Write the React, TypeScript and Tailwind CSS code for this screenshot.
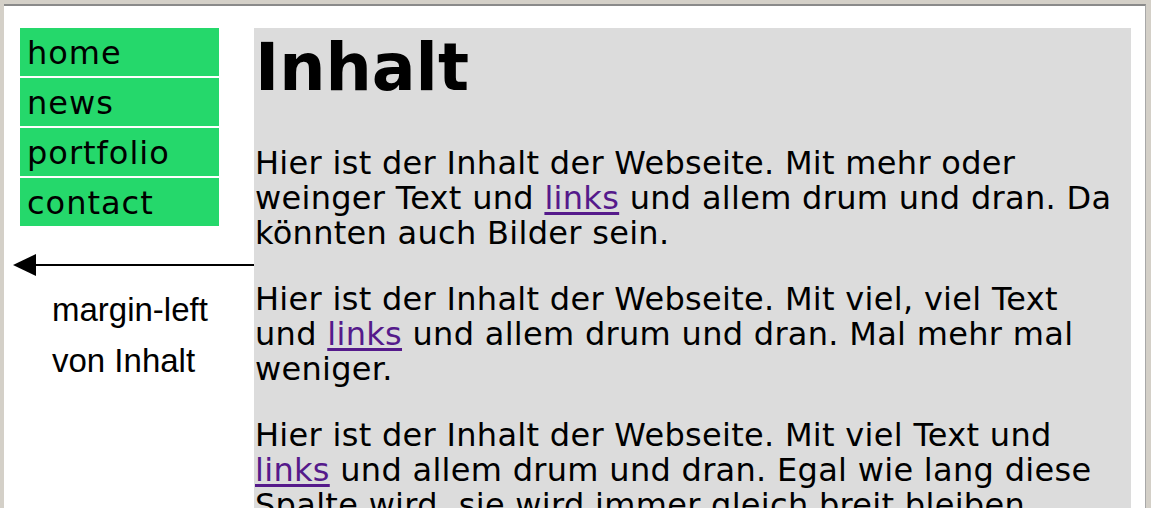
import React from 'react';

const navItems = ['home', 'news', 'portfolio', 'contact'];

const Link: React.FC<{ children: React.ReactNode }> = ({ children }) => (
  <a href="#" className="text-[#551a8b] underline underline-offset-[3px]">
    {children}
  </a>
);

export default function App() {
  return (
    <div className="h-[508px] overflow-hidden bg-[#d4d0c8] pt-[4px] pl-[4px] pr-[5px]">
      <div className="flex h-full bg-white border-t-2 border-t-[#8a8a8a] border-r border-r-[#a8a8a8] pt-[22px]">
        {/* left column: navigation + annotation */}
        <div className="w-[250px] shrink-0 flex flex-col">
          <nav className="ml-[16px] w-[199px] flex flex-col gap-[2px]">
            {navItems.map((item) => (
              <div
                key={item}
                className="h-[48px] bg-[#25d86b] pl-[7px] leading-[50px] text-[32px] tracking-[1px] text-black"
                style={{ fontFamily: '"DejaVu Sans", Verdana, sans-serif' }}
              >
                {item}
              </div>
            ))}
          </nav>

          <svg className="mt-[28px] block" width="250" height="22" viewBox="0 0 250 22">
            <line x1="28" y1="11" x2="250" y2="11" stroke="black" strokeWidth="2" />
            <polygon points="9,11 32,0 32,22" fill="black" />
          </svg>

          <div
            className="mt-[8px] pl-[48px] text-[33px] leading-[51px] text-black"
            style={{ fontFamily: '"Liberation Sans", Arial, sans-serif' }}
          >
            <div>margin-left</div>
            <div>von Inhalt</div>
          </div>
        </div>

        {/* content column */}
        <div
          className="w-[877px] shrink-0 bg-[#dcdcdc] pl-[1px] pt-[3px] text-black"
          style={{ fontFamily: '"DejaVu Sans", Verdana, sans-serif' }}
        >
          <h1 className="m-0 text-[65px] font-bold leading-[74px]">Inhalt</h1>
          <div className="pt-[41px] pr-[10px] flex flex-col gap-[31px] text-[32px] leading-[35px] tracking-[0.3px]">
            <p>
              Hier ist der Inhalt der Webseite. Mit mehr oder weinger Text und <Link>links</Link> und
              allem drum und dran. Da könnten auch Bilder sein.
            </p>
            <p>
              Hier ist der Inhalt der Webseite. Mit viel, viel Text und <Link>links</Link> und allem
              drum und dran. Mal mehr mal weniger.
            </p>
            <p>
              Hier ist der Inhalt der Webseite. Mit viel Text und <Link>links</Link> und allem drum und
              dran. Egal wie lang diese Spalte wird, sie wird immer gleich breit bleiben.
            </p>
          </div>
        </div>
      </div>
    </div>
  );
}
